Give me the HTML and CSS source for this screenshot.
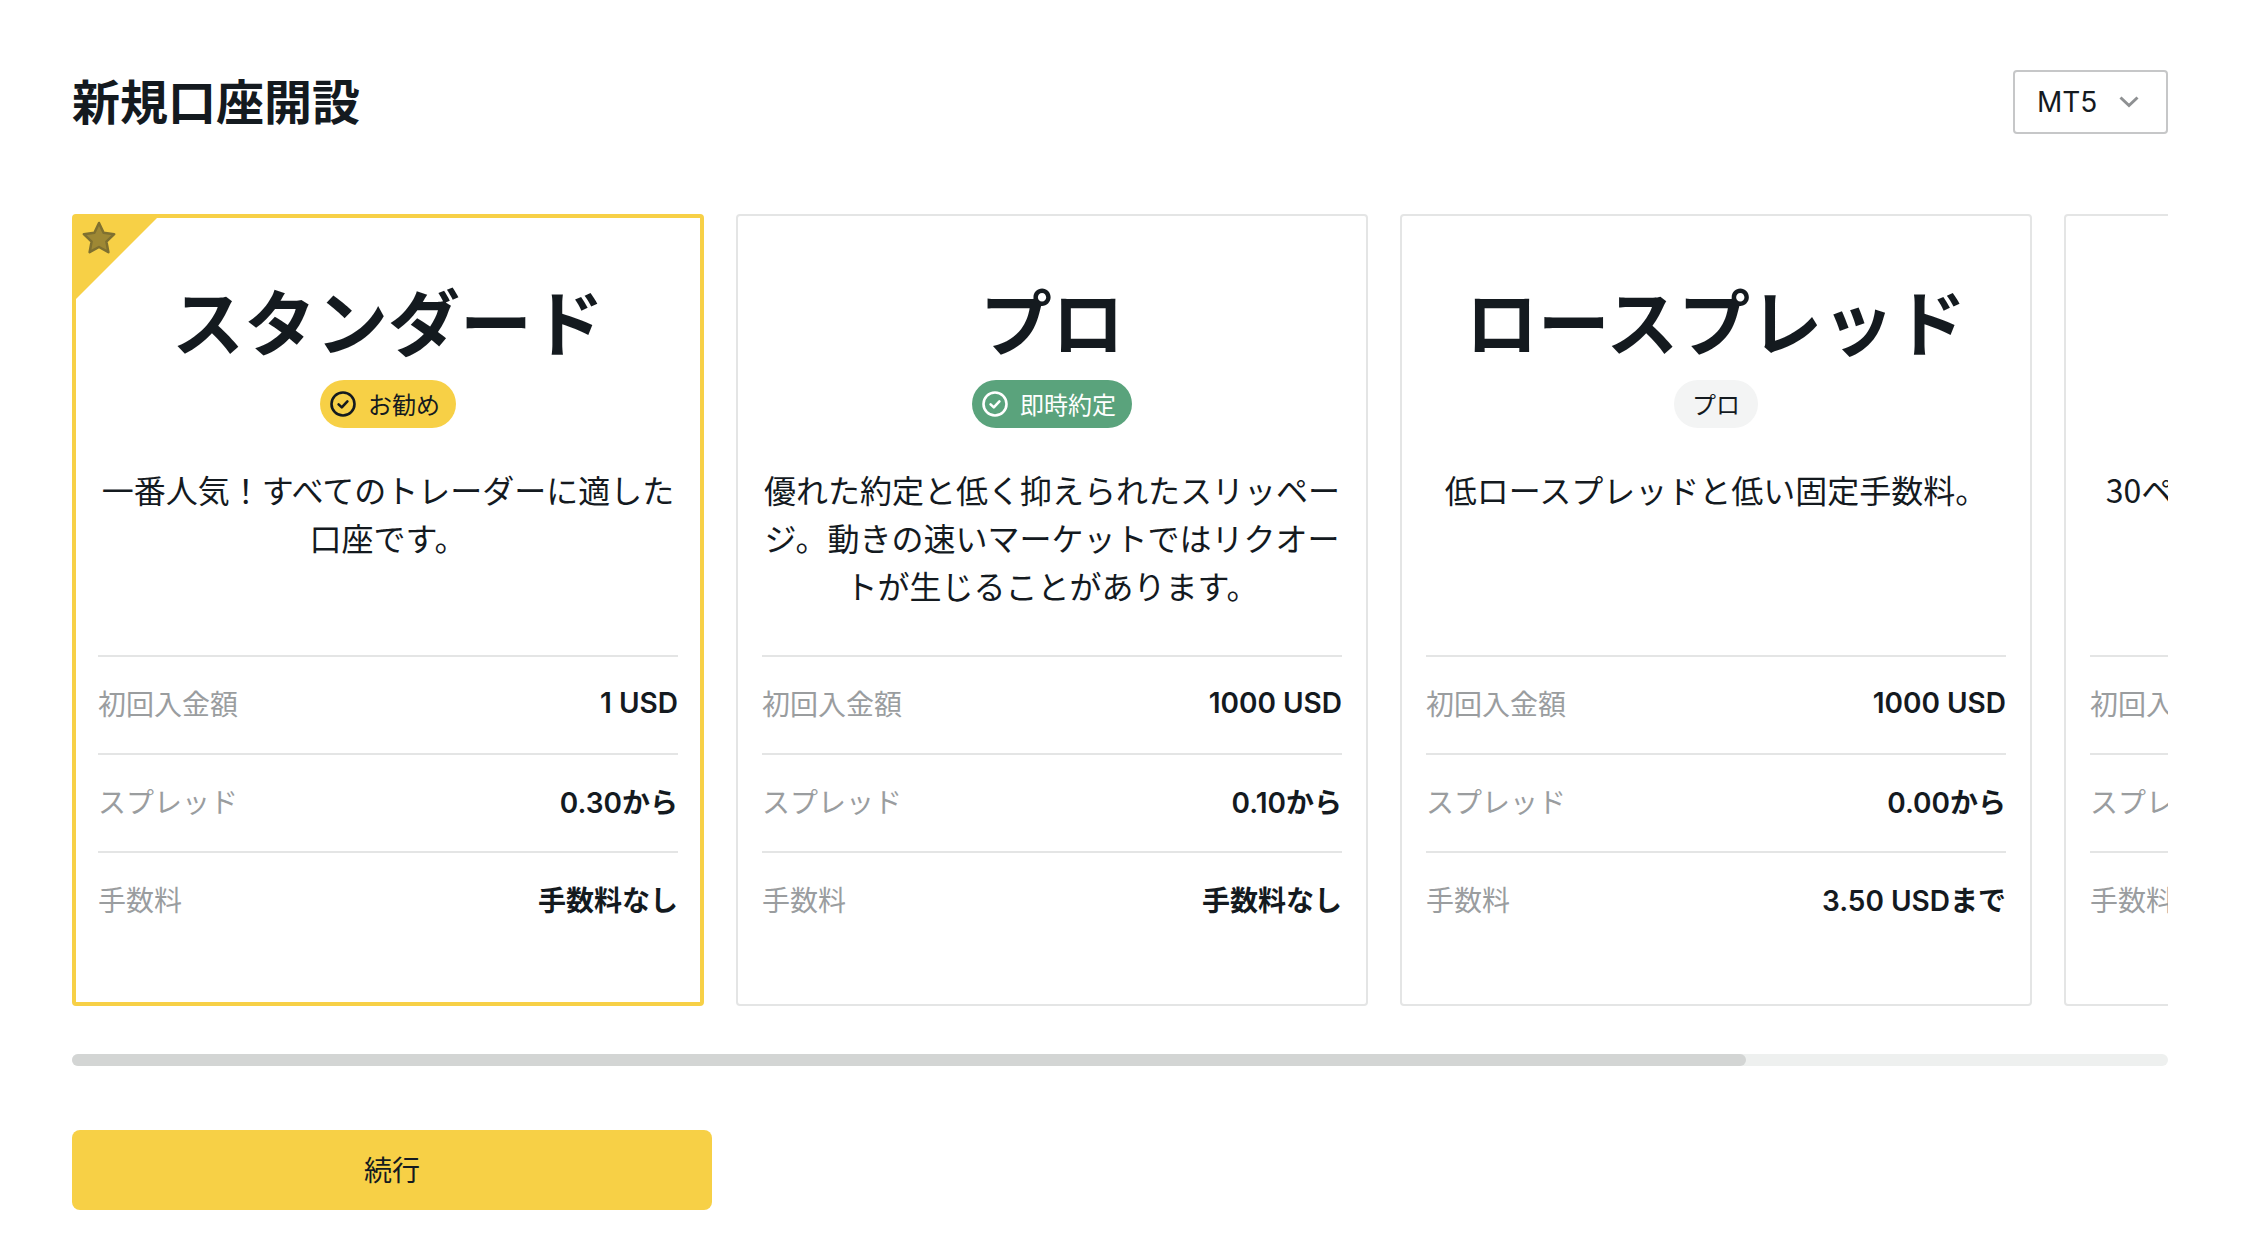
FILE: index.html
```html
<!DOCTYPE html>
<html lang="ja">
<head>
  <meta charset="UTF-8" />
  <meta name="viewport" content="width=device-width, initial-scale=1.0"/>
  <title>新規口座開設</title>
  <link rel="stylesheet" href="styles.css">
</head>
<body>
  <div class="page">
    <div class="header">
      <h1>新規口座開設</h1>
      <div class="select">
        <span>MT5</span>
        <svg class="chevron" viewBox="0 0 20 12" width="20" height="12"><path d="M1.5 1.5l8.5 8 8.5-8" /></svg>
      </div>
    </div>

    <div class="cards">
      <!-- Standard -->
      <div class="card featured">
        <div class="corner"></div>
        <svg class="star" viewBox="0 0 36 36" width="36" height="36"><path d="M18 3l4.6 9.8 10.6 1.4-7.8 7.4 2 10.6-9.4-5.2-9.4 5.2 2-10.6-7.8-7.4 10.6-1.4z" /></svg>
        <h2>スタンダード</h2>
        <div class="badge-row">
          <span class="badge yellow">
            <svg class="check" viewBox="0 0 26 26" width="26" height="26"><circle cx="13" cy="13" r="11.5" /><path d="M8.6 13.4l3.2 3 5.6-6" /></svg>
            <span>お勧め</span>
          </span>
        </div>
        <p class="desc">一番人気！すべてのトレーダーに適した口座です。</p>
        <div class="rows">
          <div class="row"><span class="label">初回入金額</span><span class="value">1 USD</span></div>
          <div class="row"><span class="label">スプレッド</span><span class="value">0.30から</span></div>
          <div class="row"><span class="label">手数料</span><span class="value">手数料なし</span></div>
        </div>
      </div>

      <!-- Pro -->
      <div class="card">
        <h2>プロ</h2>
        <div class="badge-row">
          <span class="badge green">
            <svg class="check" viewBox="0 0 26 26" width="26" height="26"><circle cx="13" cy="13" r="11.5" /><path d="M8.6 13.4l3.2 3 5.6-6" /></svg>
            <span>即時約定</span>
          </span>
        </div>
        <p class="desc">優れた約定と低く抑えられたスリッページ。動きの速いマーケットではリクオートが生じることがあります。</p>
        <div class="rows">
          <div class="row"><span class="label">初回入金額</span><span class="value">1000 USD</span></div>
          <div class="row"><span class="label">スプレッド</span><span class="value">0.10から</span></div>
          <div class="row"><span class="label">手数料</span><span class="value">手数料なし</span></div>
        </div>
      </div>

      <!-- Raw spread -->
      <div class="card">
        <h2>ロースプレッド</h2>
        <div class="badge-row">
          <span class="badge grey">プロ</span>
        </div>
        <p class="desc">低ロースプレッドと低い固定手数料。</p>
        <div class="rows">
          <div class="row"><span class="label">初回入金額</span><span class="value">1000 USD</span></div>
          <div class="row"><span class="label">スプレッド</span><span class="value">0.00から</span></div>
          <div class="row"><span class="label">手数料</span><span class="value">3.50 USDまで</span></div>
        </div>
      </div>

      <!-- Zero, cut off by the scroller -->
      <div class="card">
        <h2>ゼロ</h2>
        <div class="badge-row">
          <span class="badge grey">プロ</span>
        </div>
        <p class="desc">30ペアで一日の95%の時間スプレッドがゼロ。</p>
        <div class="rows">
          <div class="row"><span class="label">初回入金額</span><span class="value">1000 USD</span></div>
          <div class="row"><span class="label">スプレッド</span><span class="value">0.00から</span></div>
          <div class="row"><span class="label">手数料</span><span class="value">0.20 USDから</span></div>
        </div>
      </div>
    </div>

    <div class="scrollbar"><div class="thumb"></div></div>

    <button class="next">続行</button>
  </div>
</body>
</html>
```

FILE: styles.css
```css
* {
  box-sizing: border-box;
}

body {
  margin: 0;
  background: #fff;
  color: #141a1f;
  font-family: Inter, 'Noto Sans CJK JP', sans-serif;
}

.page {
  width: 2242px;
  height: 1250px;
  padding: 70px 74px 0 72px;
  overflow: hidden;
}

.header {
  display: flex;
  justify-content: space-between;
  align-items: center;
  height: 64px;
  margin-bottom: 80px;
}

h1 {
  margin: 0 0 6px;
  font-family: 'Noto Sans CJK JP', sans-serif;
  font-size: 48px;
  font-weight: 700;
}

.select {
  display: flex;
  justify-content: space-between;
  align-items: center;
  width: 155px;
  height: 64px;
  padding: 0 27px 0 22px;
  border: 2px solid #c6c7c8;
  border-radius: 4px;
  font-size: 28px;
}

.chevron path {
  fill: none;
  stroke: #8e9092;
  stroke-width: 3;
}

.cards {
  display: flex;
  gap: 32px;
  overflow: hidden;
}

.card {
  position: relative;
  flex: 0 0 632px;
  height: 792px;
  padding: 55px 24px 0;
  border: 2px solid #e4e5e5;
  border-radius: 4px;
}

.card.featured {
  padding: 53px 22px 0;
  border: 4px solid #f7d046;
}

.corner {
  position: absolute;
  top: 0;
  left: 0;
  width: 81px;
  height: 81px;
  background: #f7d046;
  clip-path: polygon(0 0, 100% 0, 0 100%);
}

.star {
  position: absolute;
  top: 2px;
  left: 5px;
}

.star path {
  fill: #9e8834;
  stroke: #7f7030;
  stroke-width: 2.5;
  stroke-linejoin: round;
}

h2 {
  margin: 0;
  height: 101px;
  font-family: 'Noto Sans CJK JP', sans-serif;
  font-size: 72px;
  font-weight: 700;
  line-height: 96px;
  text-align: center;
  white-space: nowrap;
}

.badge-row {
  display: flex;
  justify-content: center;
  margin-top: 8px;
}

.badge {
  display: flex;
  align-items: center;
  gap: 12px;
  height: 48px;
  padding: 0 16px 0 10px;
  border-radius: 24px;
  font-family: 'Noto Sans CJK JP', sans-serif;
  font-size: 24px;
}

.badge span {
  padding-bottom: 2px;
}

.badge.yellow {
  background: #f7d046;
}

.badge.green {
  background: #5aa37c;
  color: #fff;
}

.badge.grey {
  padding: 0 18px 2px;
  background: #f3f4f4;
}

.check {
  fill: none;
  stroke: currentColor;
  stroke-width: 2.6;
  stroke-linecap: round;
  stroke-linejoin: round;
}

.desc {
  height: 144px;
  margin: 37px 0 46px;
  font-family: 'Noto Sans CJK JP', sans-serif;
  font-size: 32px;
  line-height: 48px;
  text-align: center;
}

.row {
  display: flex;
  justify-content: space-between;
  align-items: center;
  height: 98px;
  padding-bottom: 4px;
  border-top: 2px solid #e4e5e5;
  font-size: 28px;
}

.label {
  color: #9a9d9f;
}

.value {
  font-weight: 600;
}

.scrollbar {
  height: 12px;
  margin-top: 48px;
  border-radius: 6px;
  background: #eef0ef;
}

.thumb {
  width: 1674px;
  height: 12px;
  border-radius: 6px;
  background: #d3d5d4;
}

.next {
  display: block;
  width: 640px;
  height: 80px;
  margin-top: 64px;
  padding-bottom: 3px;
  border: none;
  border-radius: 8px;
  background: #f7d046;
  color: #141a1f;
  font-family: 'Noto Sans CJK JP', sans-serif;
  font-size: 28px;
}
```
